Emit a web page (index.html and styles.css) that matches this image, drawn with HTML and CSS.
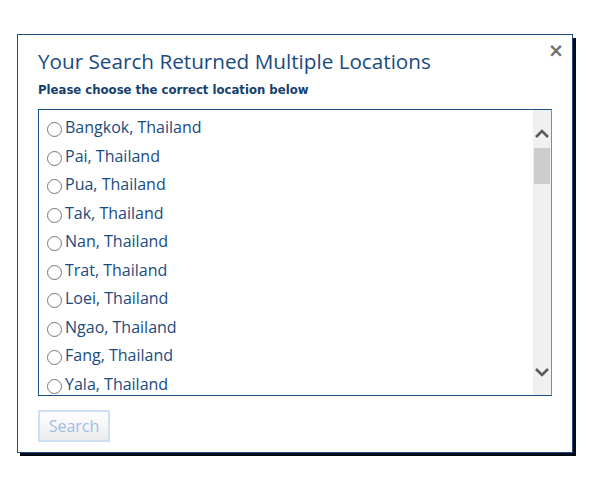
FILE: index.html
```html
<!DOCTYPE html>
<html>
<head>
<meta charset="utf-8">
<link rel="stylesheet" href="styles.css">
</head>
<body>
<div class="frame">
<div class="dialog">
  <span class="close">×</span>
  <h1 class="title">Your Search Returned Multiple Locations</h1>
  <p class="subtitle">Please choose the correct location below</p>
  <div class="listbox">
    <ul class="items">
      <li class="item"><span class="radio"></span><span class="label">Bangkok, Thailand</span></li>
      <li class="item"><span class="radio"></span><span class="label">Pai, Thailand</span></li>
      <li class="item"><span class="radio"></span><span class="label">Pua, Thailand</span></li>
      <li class="item"><span class="radio"></span><span class="label">Tak, Thailand</span></li>
      <li class="item"><span class="radio"></span><span class="label">Nan, Thailand</span></li>
      <li class="item"><span class="radio"></span><span class="label">Trat, Thailand</span></li>
      <li class="item"><span class="radio"></span><span class="label">Loei, Thailand</span></li>
      <li class="item"><span class="radio"></span><span class="label">Ngao, Thailand</span></li>
      <li class="item"><span class="radio"></span><span class="label">Fang, Thailand</span></li>
      <li class="item"><span class="radio"></span><span class="label">Yala, Thailand</span></li>
    </ul>
    <div class="scrollbar">
      <svg class="arrow" width="18" height="14" viewBox="0 0 18 14"><path d="M3 10 L9 4 L15 10" fill="none" stroke="#5a5a5a" stroke-width="2.6"/></svg>
      <div class="thumb"></div>
      <div class="track"></div>
      <svg class="arrow down" width="18" height="14" viewBox="0 0 18 14"><path d="M3 4 L9 10 L15 4" fill="none" stroke="#5a5a5a" stroke-width="2.6"/></svg>
    </div>
  </div>
  <button class="search" disabled>Search</button>
</div>
</div>
</body>
</html>
```
FILE: styles.css
```css
html, body {
  margin: 0;
  padding: 0;
  background: #fff;
}
body {
  font-family: "Open Sans", "Noto Sans", sans-serif;
}
.frame {
  display: inline-block;
  margin: 34px 0 0 17px;
  padding: 0 3px 3px 0;
  background: linear-gradient(#000a14, #000a14) right 0 bottom 0 / calc(100% - 3px) calc(100% - 4px) no-repeat;
}
.dialog {
  position: relative;
  box-sizing: border-box;
  width: 556px;
  height: 419px;
  border: 1px solid #1d4f86;
  padding: 12px 20px 0 20px;
  background: #fff;
}
.close {
  position: absolute;
  right: 8px;
  top: 4px;
  font-family: "DejaVu Sans", sans-serif;
  font-weight: bold;
  font-size: 19px;
  color: #6f6f6f;
}
.title {
  margin: 0;
  font-weight: normal;
  font-size: 20.7px;
  line-height: 28px;
  color: #1a4a80;
}
.subtitle {
  margin: 8px 0 0 0;
  font-family: "DejaVu Sans", sans-serif;
  font-weight: bold;
  font-size: 11.7px;
  line-height: 15px;
  color: #163f6e;
}
.listbox {
  margin-top: 11px;
  box-sizing: border-box;
  width: 514px;
  height: 287px;
  border: 1px solid #1d4f86;
  border-right-color: #6e90b8;
  display: flex;
}
.items {
  flex: 1;
  margin: 0;
  padding: 3px 0 0 0;
  list-style: none;
  overflow: hidden;
}
.item {
  height: 28.5px;
  flex-shrink: 0;
  display: flex;
  align-items: center;
  font-size: 16px;
  color: #1a4a80;
}
.radio {
  box-sizing: border-box;
  width: 15px;
  height: 15px;
  margin: 5px 3px 0 8px;
  border: 1px solid #777;
  border-radius: 50%;
  background: #fff;
}
.scrollbar {
  width: 18px;
  background: #f0f0f0;
  display: flex;
  flex-direction: column;
  align-items: center;
  padding-top: 17px;
}
.arrow {
  display: block;
}
.thumb {
  width: 16px;
  height: 36px;
  margin-top: 7px;
  background: #cdcdcd;
}
.track {
  flex: 1;
}
.arrow.down {
  margin-bottom: 16px;
}
.search {
  display: block;
  margin-top: 14px;
  width: 72px;
  height: 32px;
  box-sizing: border-box;
  border: 2px solid #cfe0f5;
  background: linear-gradient(#ffffff, #ececec);
  color: #9fbde8;
  font-family: "Open Sans", sans-serif;
  font-size: 16px;
  line-height: 26px;
  padding: 0;
}
```
